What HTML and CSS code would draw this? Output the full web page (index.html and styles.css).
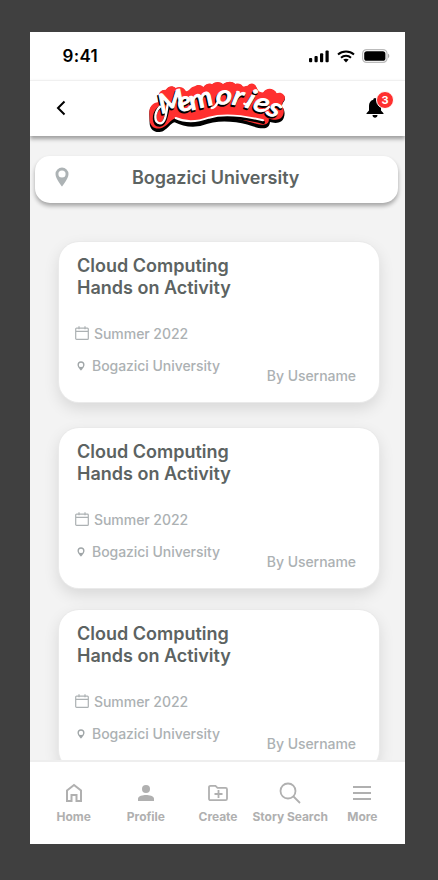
FILE: index.html
```html
<!DOCTYPE html>
<html lang="en">
<head>
<meta charset="utf-8">
<title>Memories</title>
<link rel="stylesheet" href="styles.css">
</head>
<body>
<svg class="sprite" width="0" height="0" aria-hidden="true">
  <symbol id="calendar" viewBox="0 0 14 14"><path d="M1.600 2.100h10.800a.9.9 0 0 1 .9.9v9.400a.9.9 0 0 1-.9.9H1.600a.9.9 0 0 1-.9-.9V3a.9.9 0 0 1 .9-.9zM.7 5.300h12.600M4 .2v3M10 .2v3" fill="none" stroke="currentColor" stroke-width="1.200"/></symbol>
  <symbol id="pin" viewBox="0 0 14 20"><path fill-rule="evenodd" d="M7 .5A6.500 6.500 0 0 0 .5 7C.5 11.800 7 19.500 7 19.500S13.500 11.800 13.500 7A6.500 6.500 0 0 0 7 .5zm0 2.900a3.600 3.600 0 1 1 0 7.200a3.600 3.600 0 0 1 0-7.200z" fill="currentColor"/></symbol>
  <symbol id="pin-small" viewBox="0 0 8 10"><path fill-rule="evenodd" d="M4 .3A3.500 3.500 0 0 0 .5 3.800C.5 6.200 4 9.700 4 9.700S7.500 6.200 7.500 3.800A3.500 3.500 0 0 0 4 .3zm0 1.400a2.200 2.200 0 1 1 0 4.400a2.200 2.200 0 0 1 0-4.400z" fill="currentColor"/></symbol>
</svg>
<main class="phone">
  <div class="status">
    <span class="time">9:41</span>
    <div class="signals">
      <svg width="20" height="13" viewBox="0 0 20 13"><rect x="0" y="8" width="3.200" height="4.300" rx="1"/><rect x="5.500" y="6" width="3.200" height="6.300" rx="1"/><rect x="11" y="3.200" width="3.200" height="9.100" rx="1"/><rect x="16.500" y=".5" width="3.200" height="11.800" rx="1"/></svg>
      <svg width="18" height="13" viewBox="0 0 18 13"><g fill="none" stroke="#000" stroke-width="2"><path d="M1 4.500c4.500-4 11.500-4 16 0M4 7.700c2.800-2.500 7.200-2.500 10 0"/></g><path d="M6.300 9.600c1.500-1.300 3.900-1.300 5.400 0L9 12.400z"/></svg>
      <svg width="28" height="14" viewBox="0 0 28 14"><rect x=".6" y=".6" width="24.400" height="12.800" rx="4" fill="#fff" stroke="#bbb" stroke-width="1.200"/><rect x="2.200" y="2.200" width="21.200" height="9.600" rx="2.600"/><path d="M26 4.800c1.700.5 1.700 3.900 0 4.400z" fill="#aaa"/></svg>
    </div>
  </div>
  <header class="header">
    <svg class="back" width="10" height="16" viewBox="0 0 10 16"><path d="M8.500 1.500L2 8l6.500 6.500" fill="none" stroke="#000" stroke-width="2"/></svg>
    <svg class="logo" width="155" height="58" viewBox="0 0 465 174">
      <g stroke-linejoin="round" stroke-linecap="round">
        <path fill="#000" d="M28 116C27 94 38 83 56 81C50 58 60 42 78 43C84 31 98 29 107 38C118 32 132 36 138 48C149 47 151 35 164 33C174 26 184 28 190 35C202 20 213 24 216 27C226 16 241 18 249 26C262 17 277 16 286 26C296 23 304 26 308 33C312 36 317 30 323 31C331 21 345 23 349 35C355 48 360 52 370 51C378 36 403 37 410 54C423 48 435 58 435 68C434 77 424 82 426 93C438 103 435 128 424 136C412 144 397 140 390 138C389 152 380 158 367 157C350 157 324 144 288 139C248 134 217 137 188 148C160 157 127 151 104 139C91 142 85 157 71 164C51 175 31 164 29 144Z"/>
        <path fill="#ff302f" d="M28 112C27 92 38 80 56 78C50 56 60 40 78 41C84 29 98 27 107 36C118 30 132 34 138 46C149 45 151 33 164 31C174 24 184 26 190 33C202 18 213 22 216 25C226 15 241 16 249 24C262 16 277 15 286 24C296 21 304 24 308 31C312 34 317 28 323 29C331 19 345 21 349 33C355 46 360 50 370 49C378 34 403 35 410 52C423 46 435 56 435 66C434 75 424 80 426 91C435 100 432 120 422 127C412 134 397 130 386 128C389 139 380 148 365 146C350 146 324 133 288 128C248 123 217 126 188 137C160 146 127 141 104 128C91 131 85 146 71 153C51 164 31 154 29 134Z"/>
        <path d="M107 131C137 145 176 142 211 130C256 116 309 123 370 139" fill="none" stroke="#000" stroke-width="10"/>
        <path d="M107 126C137 140 174 137 207 125C252 112 307 118 369 133" fill="none" stroke="#fff" stroke-width="6"/>
        <path d="M56 97C38 115 40 147 58 147C75 149 79 119 84 96" fill="none" stroke="#000" stroke-width="10"/>
        <use href="#word" x="-3" y="5" fill="#000" stroke="#000" stroke-width="5"/>
        <g fill="#fff" stroke="#fff" stroke-width="3"><text id="word" class="wordmark" transform="scale(1.15 1)" x="56 105 135 197 238 271 291 327" y="113 109 103 83 84 92 98 113" rotate="-17 -18 -17 4 12 20 22 26">Memories</text></g>
        <path d="M60 92C42 110 41 141 60 142C76 142 79 112 83 85M215 96Q225 96 233 79M313 83Q317 88 325 81M365 103Q376 105 387 93" fill="none" stroke="#fff" stroke-width="7"/>
      </g>
    </svg>
    <div class="bell">
      <svg width="18" height="21" viewBox="0 0 18 21"><path d="M9 0a1.700 1.700 0 0 1 1.700 1.800C13.700 2.500 15 5 15 8v4.500l2.500 2.700V16H.5v-.8L3 12.500V8c0-3 1.500-5.500 4.300-6.200C7.300.8 8 0 9 0zM6.500 17h5c0 3.500-5 3.500-5 0z"/></svg>
      <span class="badge">3</span>
    </div>
  </header>
  <section class="content">
    <div class="place"><svg width="14" height="20"><use href="#pin"/></svg><h1>Bogazici University</h1></div>
    <article class="card">
      <h2>Cloud Computing<br>Hands on Activity</h2>
      <p class="date"><svg width="14" height="14"><use href="#calendar"/></svg>Summer 2022</p>
      <p class="where"><svg width="8" height="10"><use href="#pin-small"/></svg>Bogazici University</p>
      <p class="author">By Username</p>
    </article>
    <article class="card">
      <h2>Cloud Computing<br>Hands on Activity</h2>
      <p class="date"><svg width="14" height="14"><use href="#calendar"/></svg>Summer 2022</p>
      <p class="where"><svg width="8" height="10"><use href="#pin-small"/></svg>Bogazici University</p>
      <p class="author">By Username</p>
    </article>
    <article class="card">
      <h2>Cloud Computing<br>Hands on Activity</h2>
      <p class="date"><svg width="14" height="14"><use href="#calendar"/></svg>Summer 2022</p>
      <p class="where"><svg width="8" height="10"><use href="#pin-small"/></svg>Bogazici University</p>
      <p class="author">By Username</p>
    </article>
  </section>
  <nav class="tabs">
    <a><svg width="24" height="24" viewBox="0 0 24 24" fill="none" stroke="currentColor" stroke-width="2"><path d="M5 9.500L12 4l7 5.500V20h-4.500v-6h-5v6H5z"/></svg>Home</a>
    <a><svg width="24" height="24" viewBox="0 0 24 24" fill="currentColor"><circle cx="12" cy="8" r="4"/><path d="M4 20v-2.500C4 15 9 14 12 14s8 1 8 3.500V20z"/></svg>Profile</a>
    <a><svg width="24" height="24" viewBox="0 0 24 24" fill="none" stroke="currentColor" stroke-width="1.800"><path d="M4.500 4.800h5l2 2h8a1.500 1.500 0 0 1 1.500 1.500v9.400a1.500 1.500 0 0 1-1.500 1.500h-15A1.500 1.500 0 0 1 3 17.700V6.300a1.500 1.500 0 0 1 1.500-1.500zM12.500 9v8M8.500 13h8"/></svg>Create</a>
    <a><svg width="24" height="24" viewBox="0 0 24 24" fill="none" stroke="currentColor" stroke-width="1.800"><circle cx="10" cy="10" r="7.500"/><path d="M15.500 15.500l6.500 6.500"/></svg>Story Search</a>
    <a><svg width="24" height="24" viewBox="0 0 24 24" fill="none" stroke="currentColor" stroke-width="2"><path d="M3 6h18M3 12h18M3 18h18"/></svg>More</a>
  </nav>
</main>
</body>
</html>
```
FILE: styles.css
```css
* { box-sizing: border-box; }
body { margin: 0; height: 880px; padding: 32px 33px 36px 30px; background: #404040; font-family: Inter, sans-serif; overflow: hidden; }
h1, h2, p { margin: 0; }
svg { display: block; flex: none; }
.sprite { position: absolute; }
.phone { width: 375px; height: 812px; background: #f3f3f3; display: flex; flex-direction: column; overflow: hidden; }
.status { height: 48px; background: #fff; display: flex; align-items: center; justify-content: space-between; padding: 0 15px 0 32.500px; flex: none; }
.time { font-size: 17px; font-weight: 600; letter-spacing: .3px; }
.signals { display: flex; align-items: center; gap: 7.500px; }
.header { height: 56px; flex: none; background: #fff; border-top: 1px solid #f0f0f0; box-shadow: 0 3px 4px rgba(0,0,0,.35); display: flex; align-items: flex-start; justify-content: space-between; padding: 0 20px 0 26px; z-index: 2; }
.back { margin-top: 19px; }
.logo { margin: -5px 0 0 2px; }
.wordmark { font: italic 500 80px Lato, sans-serif; }
.bell { position: relative; width: 18px; margin-top: 17px; }
.bell svg { margin-left: -1px; }
.badge { position: absolute; left: 9px; top: -7px; width: 18px; height: 18px; border: 1px solid #fff; border-radius: 50%; background: #ff302f; color: #fff; font-size: 11px; line-height: 16px; font-weight: 700; text-align: center; }
.content { flex: 1; min-height: 0; overflow: hidden; padding: 20px 7px 0 5px; }
.place { height: 47px; background: #fff; border-radius: 15px; box-shadow: 0 3px 4px rgba(0,0,0,.32); display: flex; align-items: flex-start; padding: 11px 19.500px 0; margin-bottom: 39px; }
.place svg { color: #adb3b5; }
h1, h2 { color: #5c6362; font-size: 18px; line-height: 22px; font-weight: 600; }
.place h1 { margin-left: 63.500px; letter-spacing: -.03px; }
.card { width: 320px; height: 160px; margin: 0 0 26px 24px; background: #fff; border-radius: 20px; box-shadow: 0 0 0 1px #eaeaea, 0 6px 16px rgba(0,0,0,.12); padding: 13px 23px 0 18px; }
.card:nth-last-child(2) { margin-bottom: 22px; }
.card p { color: #acb1b3; font-size: 14px; line-height: 20px; font-weight: 500; letter-spacing: -.05px; }
.date, .where { display: flex; align-items: center; }
.date { gap: 5px; margin: 25px 0 12px; }
.card .date { margin-left: -2px; }
.date svg { margin-top: -2px; }
.where { gap: 7px; }
.where svg { color: #9fa5a7; }
.card .author { text-align: right; margin-top: -10px; }
.tabs { height: 84px; flex: none; display: grid; grid-template-columns: repeat(5, 72.200px); justify-content: center; background: #fff; border-top: 2px solid #eee; padding: 19px 0 0 1px; }
.tabs a { display: flex; flex-direction: column; align-items: center; gap: 4px; color: #b0b0b0; font-size: 12px; line-height: 16px; font-weight: 700; letter-spacing: -.05px; white-space: nowrap; }
```
